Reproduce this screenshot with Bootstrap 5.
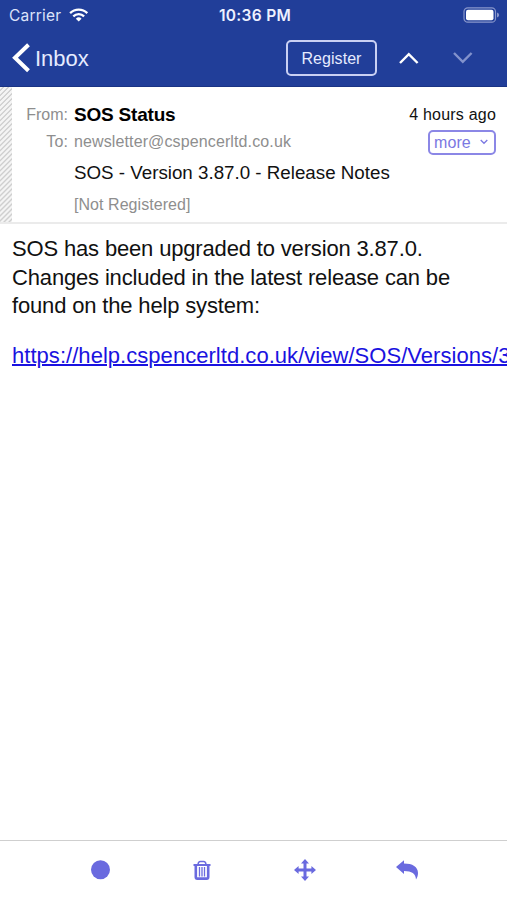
<!DOCTYPE html>
<html lang="en">
<head>
<meta charset="utf-8">
<meta name="viewport" content="width=device-width, initial-scale=1">
<title>SOS Mail</title>
<link href="https://cdn.jsdelivr.net/npm/bootstrap@5.3.0/dist/css/bootstrap.min.css" rel="stylesheet">
<style>
  body { font-family: "Liberation Sans", Arial, sans-serif; color: #111; height: 900px; }
  svg { display: block; flex: none; }
  .app-head { background: #213e99; height: 87px; border-bottom: 1px solid #1a3484; }
  .status { height: 30px; font-family: Inter, sans-serif; font-size: 15.5px; line-height: 31px; padding: 0 8px 0 9px; display: grid; grid-template-columns: 1fr auto 1fr; }
  .status > div { height: 30px; }
  .status-net { color: #dce3fa; letter-spacing: .2px; }
  .status-net svg { margin-left: 8px; margin-top: -1px; }
  .status-time { font-weight: 600; color: #eef1ff; letter-spacing: .3px; padding-left: 2px; }
  .battery { margin-right: -1px; }
  .toolbar { height: 56px; padding-left: 12px; padding-right: 34px; }
  .back { font-size: 22px; line-height: 30px; color: #e6ebff; }
  .back span { margin-left: 5px; padding-top: 1px; }
  .btn-register { width: 91px; height: 36px; font-size: 16px; line-height: 20px; letter-spacing: .05px; color: #e6ebff; border: 2px solid #c9d0f3; border-radius: 5px; padding: 1px 0 0; }
  .prev { margin-left: 22px; }
  .next { margin-left: 34px; }
  .stripes { width: 12px; background: repeating-linear-gradient(135deg, #f4f4f4 0 1.8px, #cfcfcf 2.2px 3.3px, #f4f4f4 3.54px); }
  .mail-head { height: 137px; border-bottom: 2px solid #ebebeb; }
  .mail-fields { padding-top: 18px; }
  .meta { width: 62px; text-align: right; padding-right: 6px; }
  .inset { margin-left: 62px; }
  .edge { margin-right: 11px; }
  .line { font-size: 16px; line-height: 20px; white-space: nowrap; }
  .from-row { height: 20px; }
  .dim { color: #8e8e8e; }
  .sender { font-size: 19px; color: #000; letter-spacing: -.2px; }
  .ago { letter-spacing: .2px; }
  .to-row { margin-top: 5px; }
  .to-row .dim { padding-top: 2px; letter-spacing: .12px; }
  .subject { font-size: 18.75px; margin-top: 8px; }
  .tag-line { margin-top: 12px; letter-spacing: .05px; }
  .btn-more { width: 68px; height: 25px; border: 2px solid #8b87e6; color: #7b78e2; border-radius: 5px; font-size: 16px; line-height: 20px; padding: 1px 6px 0 4px; letter-spacing: .1px; }
  .btn-more svg { margin-top: -2px; }
  .message { font-size: 22px; line-height: 28.5px; padding: 11px 0 0 12px; white-space: nowrap; letter-spacing: -.16px; }
  .message a { color: #1a12e0; text-decoration-thickness: 1.5px; letter-spacing: .04px; }
  .link-row { margin-top: 21px; }
  .app-foot { height: 60px; border-top: 1px solid #cfcfcf; color: #6a6adf; padding: 0 49px 2px; }
</style>
</head>
<body class="d-flex flex-column overflow-hidden bg-white">
<header class="app-head">
  <div class="status">
    <div class="status-net d-flex align-items-center"><span>Carrier</span>
      <svg width="20" height="14" viewBox="0 0 20 14" fill="none" stroke="#fff" stroke-width="2.3"><path d="M1.1 5.1a12.4 12.4 0 0 1 17.2 0M4.3 8.4a7.7 7.7 0 0 1 10.8 0"/><path d="M9.7 13.6 6.8 10.7a4.2 4.2 0 0 1 5.8 0z" fill="#fff" stroke="none"/></svg>
    </div>
    <div class="status-time">10:36 PM</div>
    <div class="battery d-flex align-items-center justify-content-end">
      <svg width="37" height="16" viewBox="0 0 37 16"><rect x="1" y=".8" width="31.5" height="14.4" rx="3.8" fill="none" stroke="#8997cb" stroke-width="1.2"/><rect x="3" y="2.7" width="27.5" height="10.6" rx="2" fill="#fff"/><path d="M34 5.5q2.2.9 2.2 2.5T34 10.5z" fill="#8997cb"/></svg>
    </div>
  </div>
  <nav class="toolbar d-flex align-items-center">
    <div class="back d-flex align-items-center me-auto">
      <svg width="18" height="30" viewBox="0 0 18 30" fill="none" stroke="#fff" stroke-width="4"><path d="M16.5 1.8 3 14.7 16.5 27.8"/></svg>
      <span>Inbox</span>
    </div>
    <button class="btn btn-register">Register</button>
    <svg class="prev" width="20" height="14" viewBox="0 0 20 14" fill="none" stroke="#fff" stroke-width="2.4"><path d="m1 12 8.800-8.800L18.600 12"/></svg>
    <svg class="next" width="20" height="14" viewBox="0 0 20 14" fill="none" stroke="#8292cc" stroke-width="2.4"><path d="m1 2 8.800 8.800L18.600 2"/></svg>
  </nav>
</header>
<section class="mail-head d-flex">
  <div class="stripes"></div>
  <div class="mail-fields flex-grow-1">
    <div class="from-row d-flex line">
      <div class="meta dim">From:</div><b class="sender me-auto">SOS Status</b><span class="ago edge">4 hours ago</span>
    </div>
    <div class="to-row d-flex line">
      <div class="meta dim">To:</div><span class="dim me-auto">newsletter@cspencerltd.co.uk</span>
      <button class="btn btn-more edge d-flex align-items-center justify-content-between">more
        <svg width="8" height="6" viewBox="0 0 8 6" fill="none" stroke="currentColor" stroke-width="1.3"><path d="m.7 1 3.300 3.300L7.300 1"/></svg></button>
    </div>
    <div class="line subject inset">SOS - Version 3.87.0 - Release Notes</div>
    <div class="line dim tag-line inset">[Not Registered]</div>
  </div>
</section>
<main class="message flex-grow-1 overflow-hidden">
  <p class="mb-0">SOS has been upgraded to version 3.87.0.<br>Changes included in the latest release can be<br>found on the help system:</p>
  <p class="link-row"><a href="#">https://help.cspencerltd.co.uk/view/SOS/Versions/3</a></p>
</main>
<footer class="app-foot d-flex align-items-center">
  <div class="col d-flex justify-content-center"><svg width="20" height="20" viewBox="0 0 20 20"><circle cx="10.500" cy="9.700" r="9.500" fill="currentColor"/></svg></div>
  <div class="col d-flex justify-content-center"><svg width="18" height="20" viewBox="0 0 18 20" fill="none" stroke="currentColor"><path d="M.5 5h17" stroke-width="2"/><path d="M5 4.500Q5.300 1.400 7.300 1.400h3.400q2 0 2.300 3.100" stroke-width="1.500"/><path d="M2.800 5v12q0 1.600 1.400 1.600h9.600q1.400 0 1.400-1.600V5" stroke-width="2.600"/><path d="M6.500 7v9.500M9 7v9.500M11.500 7v9.500" stroke-width="1.300"/></svg></div>
  <div class="col d-flex justify-content-center"><svg width="22" height="22" viewBox="0 0 22 22" fill="currentColor"><path d="m11 0 4 4.600h-2.500v4.900h4.900V7L22 11l-4.600 4v-2.500h-4.900v4.900H15L11 22l-4-4.600h2.500v-4.900H4.600V15L0 11l4.600-4v2.500h4.900V4.600H7z"/></svg></div>
  <div class="col d-flex justify-content-center"><svg width="22" height="20" viewBox="0 0 22 20" fill="currentColor"><path d="M0 7 8 .2v3.300c8.500 0 14 3.300 14 9.500 0 2.500-.7 4.700-2 6.500-.2-5.800-4.200-8.500-12-8.500v3z"/></svg></div>
</footer>
<script src="https://cdn.jsdelivr.net/npm/bootstrap@5.3.0/dist/js/bootstrap.bundle.min.js"></script>
</body>
</html>
